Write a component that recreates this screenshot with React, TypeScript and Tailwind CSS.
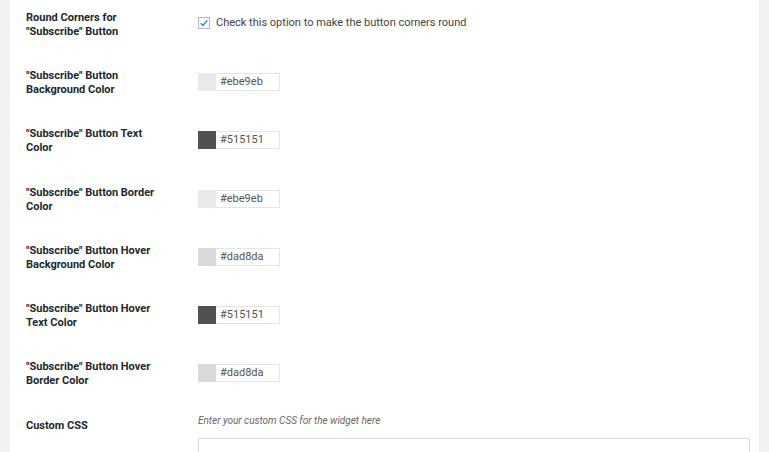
import React from 'react';

type ColorRow = { label: [string, string]; value: string };

const colorRows: ColorRow[] = [
  { label: ['"Subscribe" Button', 'Background Color'], value: '#ebe9eb' },
  { label: ['"Subscribe" Button Text', 'Color'], value: '#515151' },
  { label: ['"Subscribe" Button Border', 'Color'], value: '#ebe9eb' },
  { label: ['"Subscribe" Button Hover', 'Background Color'], value: '#dad8da' },
  { label: ['"Subscribe" Button Hover', 'Text Color'], value: '#515151' },
  { label: ['"Subscribe" Button Hover', 'Border Color'], value: '#dad8da' },
];

function Label({ lines }: { lines: string[] }) {
  return (
    <div className="w-[172px] shrink-0 text-[11px] leading-[14px] font-bold text-[#23282d]">
      {lines.map((l) => (
        <div key={l}>{l}</div>
      ))}
    </div>
  );
}

function ColorInput({ value }: { value: string }) {
  return (
    <div className="pt-[4px]">
      <div className="flex h-[18px] w-[82px] border border-[#e5e5e5] bg-white">
        <div className="-ml-px -mt-px h-[18px] w-[18px]" style={{ backgroundColor: value }} />
        <span className="pl-[4px] text-[11px] leading-[16px] text-[#555]">{value}</span>
      </div>
    </div>
  );
}

export default function App() {
  return (
    <div
      className="flex h-[452px] w-[769px] overflow-hidden bg-[#f1f1f1]"
      style={{ fontFamily: 'Roboto, "Liberation Sans", sans-serif' }}
    >
      <div className="ml-[10px] w-[749px] bg-white pl-[16px] pr-[9px] pt-[11px]">
        {/* round corners option */}
        <div className="flex h-[58.2px] items-start">
          <Label lines={['Round Corners for', '"Subscribe" Button']} />
          <div className="pt-[5px]">
            <label className="flex items-center gap-[6px]">
              <span className="flex h-[12px] w-[12px] items-center justify-center border border-[#b4b9be] bg-white">
                <svg viewBox="0 0 12 12" className="h-[10px] w-[10px]">
                  <path d="M2 6.2 L4.8 9 L10 2.8" fill="none" stroke="#1e8cbe" strokeWidth="1.6" />
                </svg>
              </span>
              <span className="text-[11px] leading-[14px] text-[#444]">
                Check this option to make the button corners round
              </span>
            </label>
          </div>
        </div>

        {colorRows.map((r) => (
          <div key={r.label.join(' ') + r.value} className="flex h-[58.2px] items-start">
            <Label lines={r.label} />
            <ColorInput value={r.value} />
          </div>
        ))}

        {/* custom css */}
        <div className="flex items-start">
          <div className="w-[172px] shrink-0 pt-[1px] text-[11px] leading-[14px] font-bold text-[#23282d]">
            Custom CSS
          </div>
          <div className="flex-1">
            <div className="-mt-[4px] text-[10px] italic leading-[14px] text-[#666]">
              Enter your custom CSS for the widget here
            </div>
            <div className="mt-[10px] h-[60px] border border-[#ddd] bg-white" />
          </div>
        </div>
      </div>
    </div>
  );
}
